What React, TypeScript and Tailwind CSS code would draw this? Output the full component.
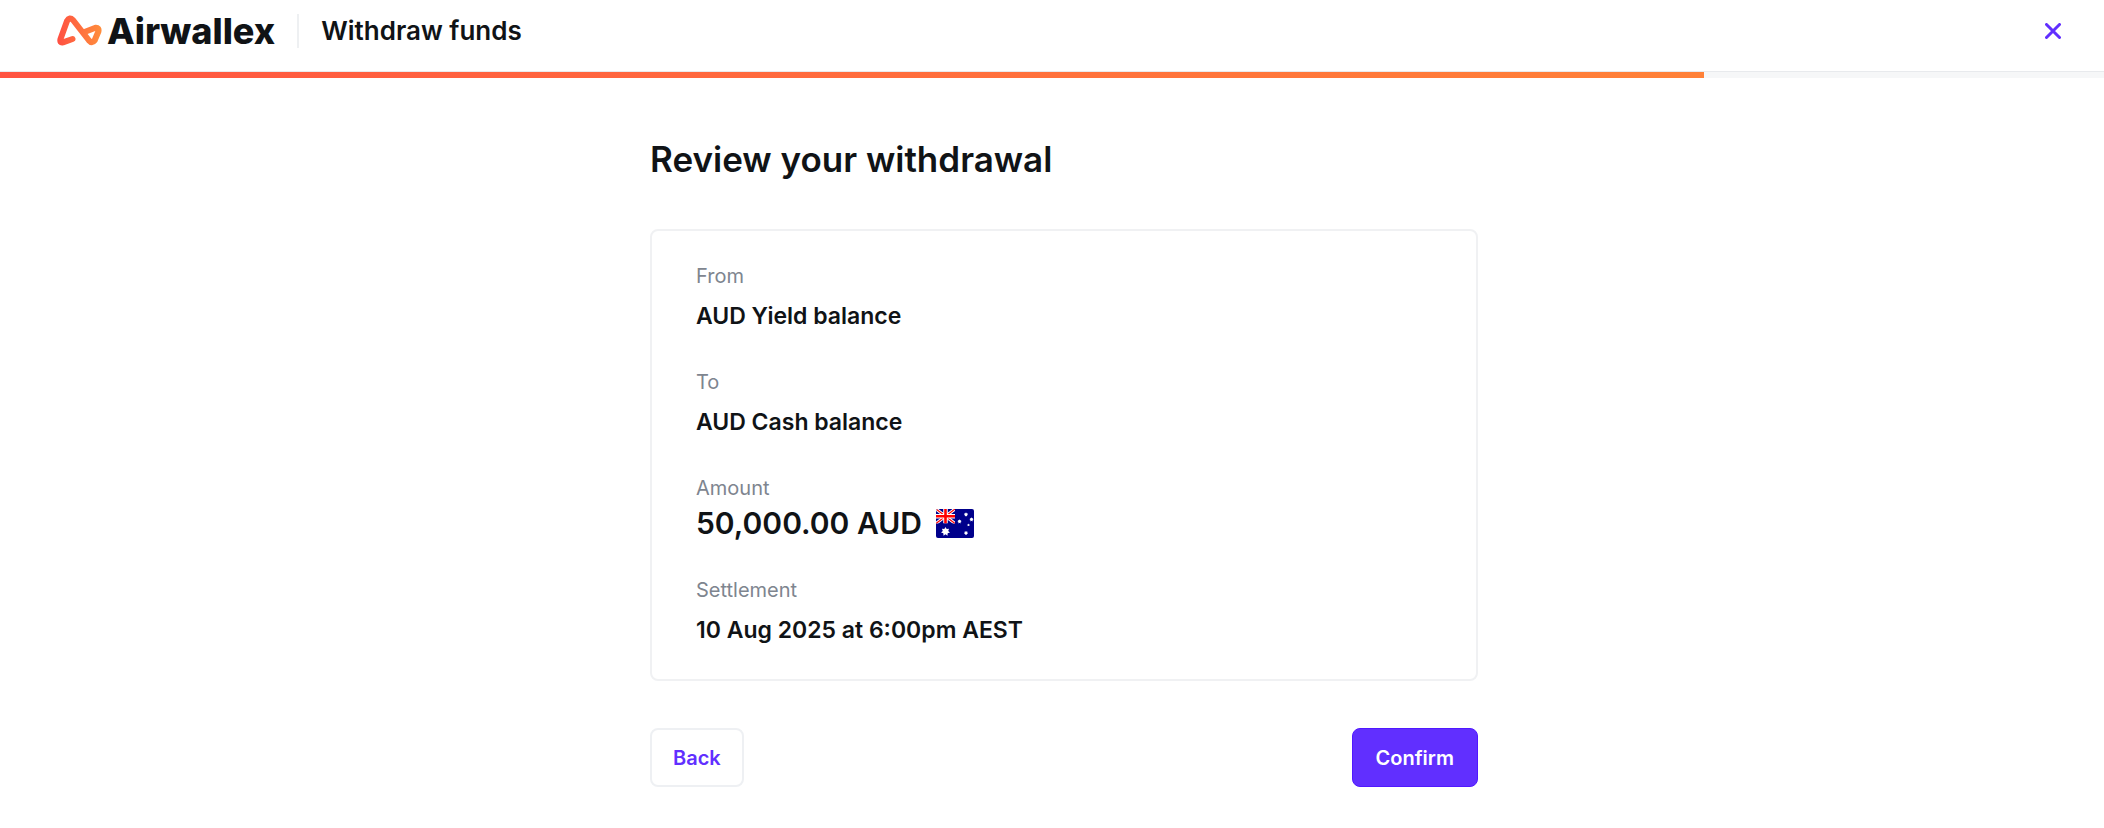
import type { ReactNode } from "react";

const details: { label: string; value: ReactNode }[] = [
  { label: "From", value: "AUD Yield balance" },
  { label: "To", value: "AUD Cash balance" },
];

function LogoMark() {
  return (
    <svg viewBox="0 0 45 31" className="h-[31px] w-[45px]" fill="none" aria-hidden="true">
      <defs>
        <linearGradient id="mark" x1="0" y1="0" x2="45" y2="0" gradientUnits="userSpaceOnUse">
          <stop stopColor="#ff4f42" />
          <stop offset="1" stopColor="#ff8e3c" />
        </linearGradient>
      </defs>
      <path
        d="M15.500 24 6 27.300Q2.500 28 3.500 24L10 6Q12.500 1.500 16 5L32 25.500Q35 29 37.600 25.500L41.400 16.500Q42.300 12.500 38.500 12.800L27.500 17"
        stroke="url(#mark)"
        strokeWidth="6"
        strokeLinecap="round"
        strokeLinejoin="round"
      />
    </svg>
  );
}

function Star({ x, y, r }: { x: number; y: number; r: number }) {
  const points = Array.from({ length: 14 }, (_, i) => {
    const angle = (Math.PI * i) / 7 - Math.PI / 2;
    const radius = i % 2 ? r * 0.6 : r;
    return `${x + radius * Math.cos(angle)},${y + radius * Math.sin(angle)}`;
  }).join(" ");
  return <polygon points={points} fill="#fff" />;
}

function AustraliaFlag() {
  return (
    <svg viewBox="0 0 38 29" className="h-[29px] w-[38px] rounded-[2px]" role="img" aria-label="Australia">
      <rect width="38" height="29" fill="#00008b" />
      <svg width="19" height="14.500" viewBox="0 0 19 14.500">
        <path d="M0 0 19 14.500M19 0 0 14.500" stroke="#fff" strokeWidth="3" />
        <path d="M0 0 19 14.500M19 0 0 14.500" stroke="#f00" strokeWidth="1.200" />
        <path d="M9.500 0V14.500M0 7.250H19" stroke="#fff" strokeWidth="4.500" />
        <path d="M9.500 0V14.500M0 7.250H19" stroke="#f00" strokeWidth="2.600" />
      </svg>
      <Star x={9.5} y={22.5} r={4.6} />
      <Star x={30} y={5.5} r={2.2} />
      <Star x={23.5} y={12.5} r={2.2} />
      <Star x={35.5} y={10.5} r={2.2} />
      <Star x={32.5} y={16} r={1.4} />
      <Star x={30} y={24} r={2.2} />
    </svg>
  );
}

function Detail({ label, children }: { label: string; children: ReactNode }) {
  return (
    <div>
      <dt className="text-xl leading-7 text-[#7e858f]">{label}</dt>
      <dd className="mt-2 text-[23px] leading-9 font-semibold">{children}</dd>
    </div>
  );
}

export default function App() {
  return (
    <div className="min-h-screen bg-white font-['Inter',sans-serif] text-[#101316]">
      <header className="flex h-[72px] items-center border-b border-[#e8eaed] pr-[39px] pb-[10px] pl-[57px]">
        <a href="#" className="flex items-center gap-[5px]">
          <LogoMark />
          <span className="text-[36px] leading-10 font-extrabold">Airwallex</span>
        </a>
        <div className="ml-[22px] h-[34px] w-0.5 bg-[#eef0f2]" />
        <p className="ml-[22px] text-[26px] leading-8 font-semibold">Withdraw funds</p>
        <button type="button" aria-label="Close" className="ml-auto p-1 text-[#612fff]">
          <svg viewBox="0 0 16 16" className="size-4" fill="none">
            <path d="M1.500 1.500 14.500 14.500M14.500 1.500 1.500 14.500" stroke="currentColor" strokeWidth="3" strokeLinecap="round" />
          </svg>
        </button>
      </header>
      <div className="h-1.5 bg-[#f6f7f8]">
        <div className="h-full w-[81%] bg-linear-to-r from-[#ff5341] to-[#ff8138]" />
      </div>

      <main className="pt-[59px] pl-6">
        <div className="mx-auto w-full max-w-[828px]">
          <h1 className="text-[35px] leading-[45px] font-semibold">Review your withdrawal</h1>

          <dl className="mt-[47px] flex flex-col gap-[34px] rounded-lg border-2 border-[#f0f1f3] px-11 py-[31px]">
            {details.map((d) => (
              <Detail key={d.label} label={d.label}>{d.value}</Detail>
            ))}
            <div>
              <dt className="text-xl leading-7 text-[#7e858f]">Amount</dt>
              <dd className="mt-0.5 flex items-center gap-3.5 text-[30px] leading-[38px] font-semibold">
                50,000.00 AUD
                <AustraliaFlag />
              </dd>
            </div>
            <Detail label="Settlement">10 Aug 2025 at 6:00pm AEST</Detail>
          </dl>

          <div className="mt-[47px] flex justify-between">
            <button type="button" className="h-[59px] rounded-lg border-2 border-[#eef0f3] px-[21px] text-xl font-semibold text-[#612fff]">
              Back
            </button>
            <button type="button" className="h-[59px] rounded-lg border border-[#5018ff] bg-[#612fff] px-[23px] text-xl font-semibold text-white">
              Confirm
            </button>
          </div>
        </div>
      </main>
    </div>
  );
}
